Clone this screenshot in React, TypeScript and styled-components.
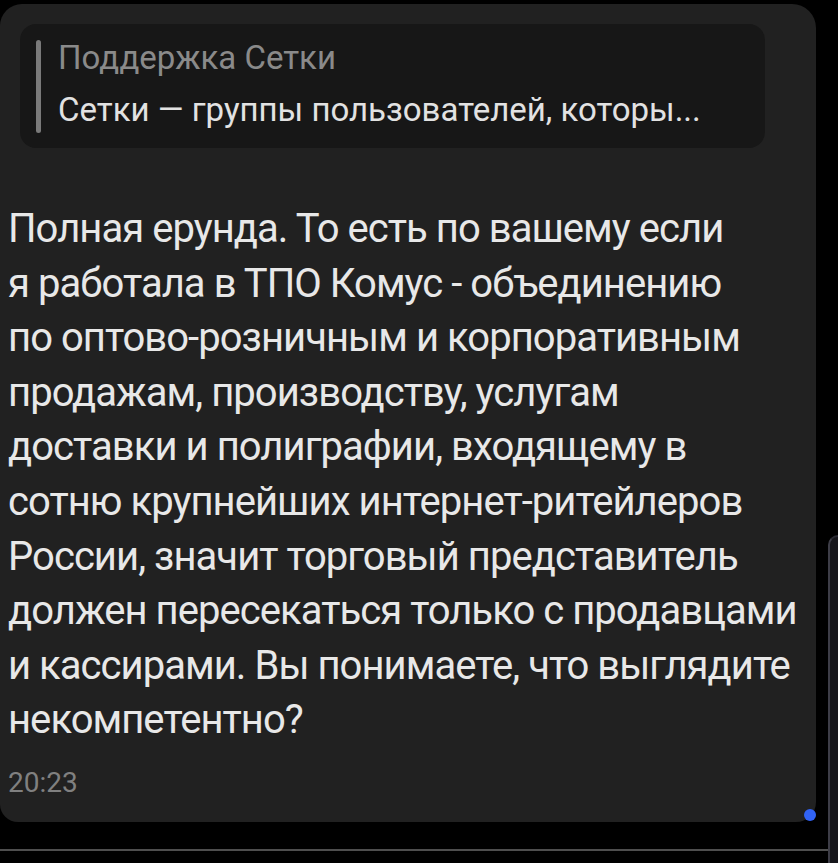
import React from "react";
import styled, { createGlobalStyle } from "styled-components";

const Global = createGlobalStyle`
  html, body {
    margin: 0;
    padding: 0;
    background: #000;
    overflow: hidden;
  }
  body {
    font-family: Roboto, "Noto Sans", "Liberation Sans", sans-serif;
    -webkit-font-smoothing: antialiased;
  }
`;

const Page = styled.div`
  display: grid;
  grid-template-columns: 828px 1fr;
  height: 863px;
  background: #000;
`;

const ChatColumn = styled.div`
  display: flex;
  flex-direction: column;
`;

const Bubble = styled.div`
  position: relative;
  width: 816px;
  margin-top: 4px;
  box-sizing: border-box;
  padding: 20px 0 21px 8px;
  background: #212121;
  border-radius: 22px 24px 20px 18px;
  color: #e6e6e6;
`;

const Quote = styled.div`
  margin-left: 12px;
  width: 745px;
  box-sizing: border-box;
  padding: 16px 20px 15px 16px;
  background: #171717;
  border-radius: 16px;
  display: flex;
  align-items: stretch;
`;

const QuoteBar = styled.div`
  width: 5px;
  flex: none;
  border-radius: 3px;
  background: #7a7a7a;
`;

const QuoteBody = styled.div`
  margin-left: 17px;
  padding-bottom: 5px;
  display: flex;
  flex-direction: column;
  gap: 16px;
  font-size: 33px;
  line-height: 36px;
  white-space: nowrap;
`;

const QuoteTitle = styled.div`
  color: #8a8a8a;
`;

const QuoteText = styled.div`
  color: #e2e2e2;
`;

const MessageText = styled.div`
  margin-top: 54px;
  font-size: 40px;
  line-height: 54.6px;
  letter-spacing: -0.95px;
  color: #e8e8e8;
  white-space: nowrap;
`;

const Line = styled.div``;

const Time = styled.div`
  margin-top: 17px;
  font-size: 28px;
  line-height: 36px;
  color: #808080;
`;

const UnreadDot = styled.span`
  position: absolute;
  right: 0;
  bottom: 1px;
  width: 12px;
  height: 12px;
  border-radius: 50%;
  background: #3163f5;
`;

const Divider = styled.div`
  margin-top: 27px;
  height: 2px;
  background: #4e4e4e;
`;

const SidePanel = styled.div`
  margin-top: 535px;
  border-left: 2px solid #3d3d47;
  border-top: 2px solid #2a2a33;
  border-top-left-radius: 16px;
  background: #16161b;
`;

const lines = [
  "Полная ерунда. То есть по вашему если",
  "я работала в ТПО Комус - объединению",
  "по оптово-розничным и корпоративным",
  "продажам, производству, услугам",
  "доставки и полиграфии, входящему в",
  "сотню крупнейших интернет-ритейлеров",
  "России, значит торговый представитель",
  "должен пересекаться только с продавцами",
  "и кассирами. Вы понимаете, что выглядите",
  "некомпетентно?",
];

export default function App() {
  return (
    <>
      <Global />
      <Page>
        <ChatColumn>
          <Bubble>
            <Quote>
              <QuoteBar />
              <QuoteBody>
                <QuoteTitle>Поддержка Сетки</QuoteTitle>
                <QuoteText>Сетки — группы пользователей, которы...</QuoteText>
              </QuoteBody>
            </Quote>
            <MessageText>
              {lines.map((l) => (
                <Line key={l}>{l}</Line>
              ))}
            </MessageText>
            <Time>20:23</Time>
            <UnreadDot />
          </Bubble>
          <Divider />
        </ChatColumn>
        <SidePanel />
      </Page>
    </>
  );
}
